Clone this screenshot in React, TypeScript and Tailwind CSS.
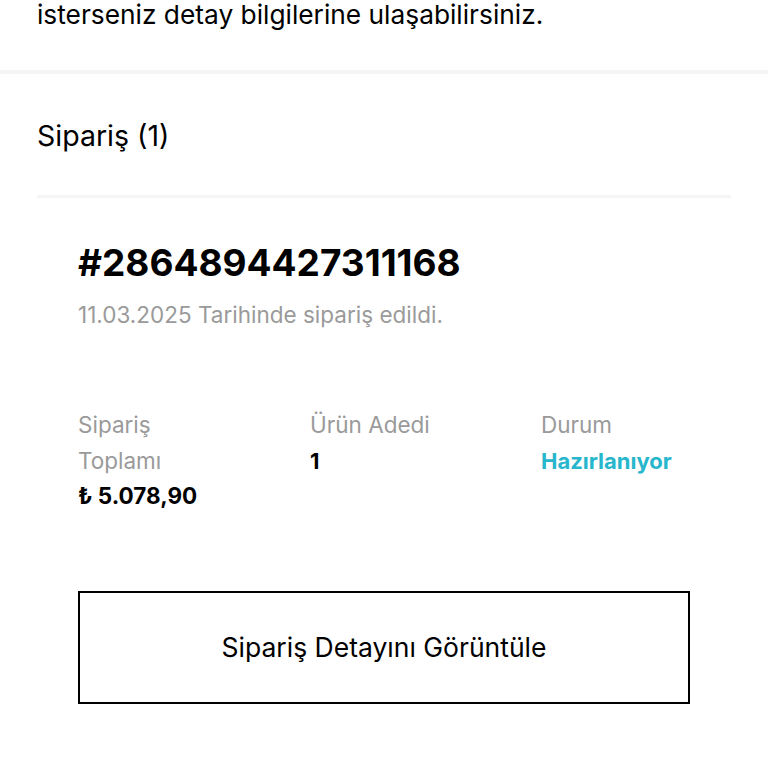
export default function App() {
  const font = { fontFamily: "Inter, 'Noto Sans', sans-serif" };
  return (
    <div className="w-[768px] h-[768px] bg-white overflow-hidden text-black" style={font}>
      <div className="px-[37px] h-[70px]">
        <p className="text-[26.3px] leading-[30px]">isterseniz detay bilgilerine ulaşabilirsiniz.</p>
      </div>
      <div className="h-[4px] bg-[#f5f5f5]" />
      <div className="px-[37px]">
        <div className="h-[121px] flex items-center">
          <h2 className="text-[28.5px] leading-[34px] pt-[2px]">Sipariş (1)</h2>
        </div>
        <div className="h-[3px] bg-[#f5f5f5]" />
        <div className="px-[41px] pt-[42px]">
          <div className="text-[37px] leading-[46px] font-bold">#2864894427311168</div>
          <div className="mt-[15px] text-[22.5px] leading-[28px] text-[#9a9a9a]">11.03.2025 Tarihinde sipariş edildi.</div>
          <div className="mt-[78px] grid grid-cols-[232px_231px_1fr]">
            <div>
              <div className="text-[22.5px] leading-[36px] text-[#9a9a9a]">Sipariş<br />Toplamı</div>
              <div className="text-[22.5px] leading-[34px] font-bold">₺ 5.078,90</div>
            </div>
            <div>
              <div className="text-[22.5px] leading-[36px] text-[#9a9a9a]">Ürün Adedi</div>
              <div className="text-[22px] leading-[36px] font-bold">1</div>
            </div>
            <div>
              <div className="text-[22.5px] leading-[36px] text-[#9a9a9a]">Durum</div>
              <div className="text-[22px] leading-[36px] font-bold text-[#27b6cc]">Hazırlanıyor</div>
            </div>
          </div>
          <button className="mt-[78px] w-[612px] h-[113px] border-2 border-black bg-white flex items-center justify-center text-[26.5px]">
            Sipariş Detayını Görüntüle
          </button>
        </div>
      </div>
    </div>
  );
}
